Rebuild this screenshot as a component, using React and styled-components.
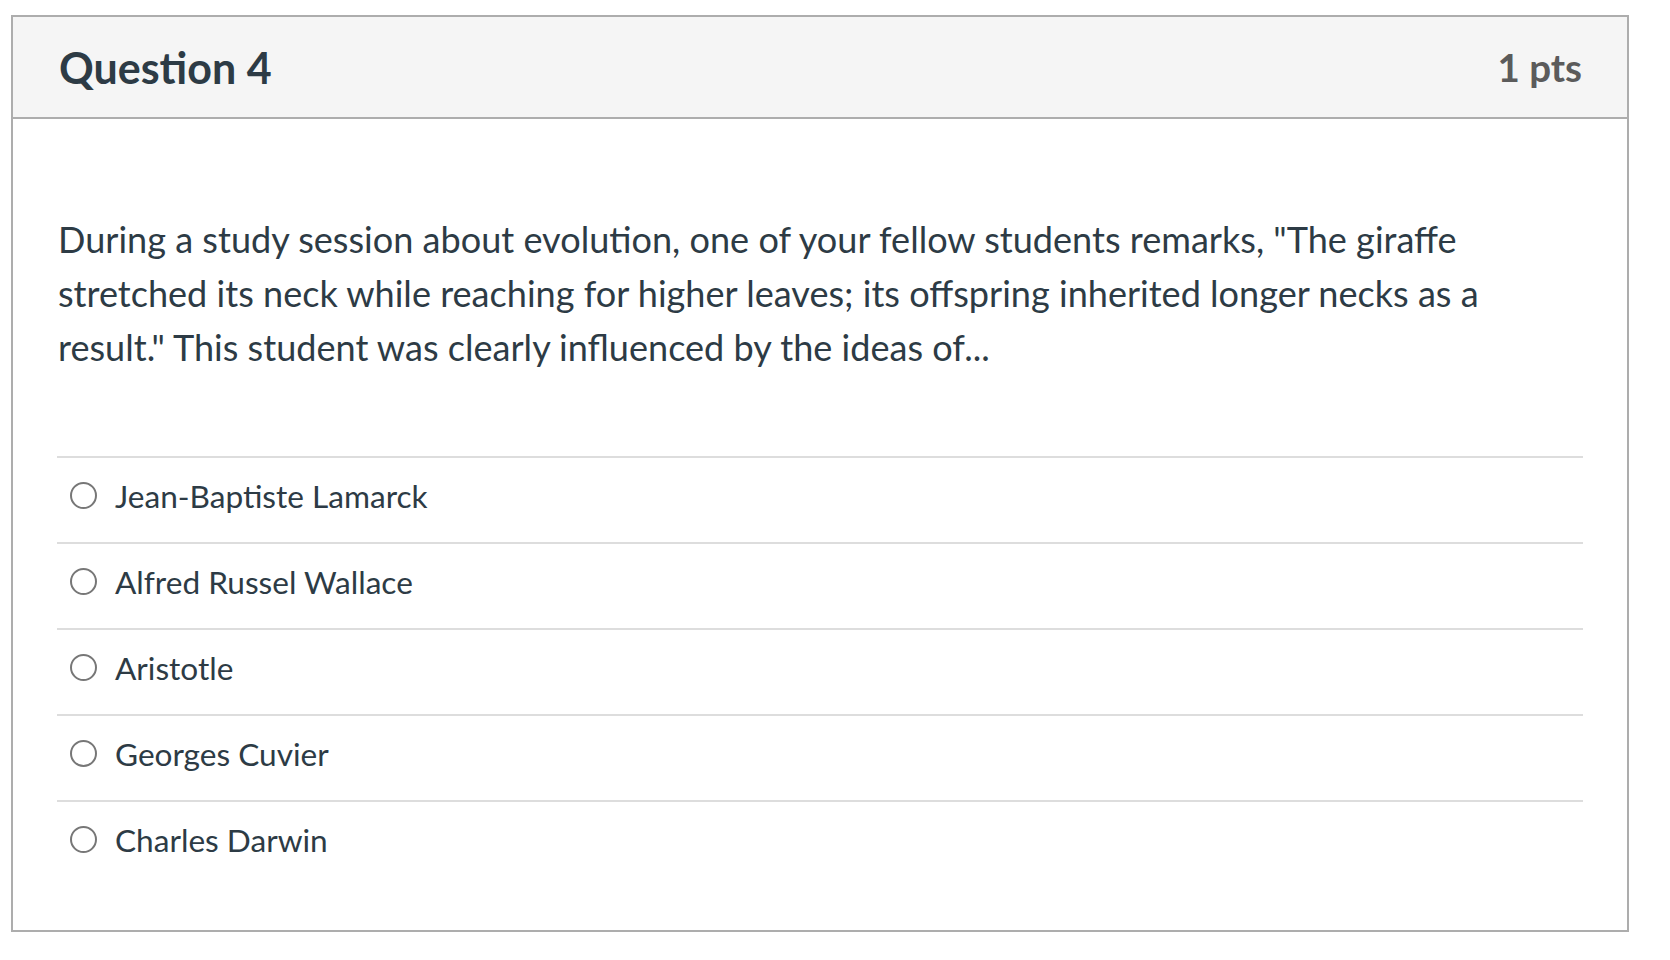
import React from "react";
import styled, { createGlobalStyle } from "styled-components";

const Global = createGlobalStyle`
  html, body { margin: 0; padding: 0; background: #ffffff; }
  body { font-family: Lato, "Noto Sans", "Liberation Sans", sans-serif; color: #2d3b45; }
`;

const Page = styled.div`
  padding: 15px 0 0 11px;
`;

const Card = styled.section`
  width: 1614px;
  border: 2px solid #adadad;
  background: #ffffff;
`;

const Header = styled.header`
  display: flex;
  align-items: center;
  justify-content: space-between;
  height: 100px;
  padding: 0 45px 0 46px;
  background: #f5f5f5;
  border-bottom: 2px solid #adadad;
`;

const Title = styled.h2`
  margin: 0;
  font-size: 43px;
  font-weight: 700;
  color: #2d3b45;
`;

const Points = styled.span`
  font-size: 38.5px;
  font-weight: 700;
  color: #5b5b5b;
`;

const Body = styled.div`
  padding: 93px 44px 44px 44px;
`;

const Prompt = styled.p`
  margin: 0 0 82px 0;
  padding: 0 10px 0 1px;
  font-size: 36.1px;
  line-height: 54px;
`;

const Answers = styled.ul`
  list-style: none;
  margin: 0;
  padding: 0;
`;

const Answer = styled.li`
  display: flex;
  align-items: center;
  gap: 18px;
  box-sizing: border-box;
  height: 86px;
  padding: 0 0 9px 13px;
  border-top: 2px solid #dddddd;
  font-size: 31.6px;
`;

const Radio = styled.span`
  flex: none;
  width: 23px;
  height: 23px;
  border: 2px solid #777777;
  border-radius: 50%;
  background: #ffffff;
`;

const options = [
  "Jean-Baptiste Lamarck",
  "Alfred Russel Wallace",
  "Aristotle",
  "Georges Cuvier",
  "Charles Darwin",
];

export default function App() {
  return (
    <>
      <Global />
      <Page>
        <Card>
          <Header>
            <Title>Question 4</Title>
            <Points>1 pts</Points>
          </Header>
          <Body>
            <Prompt>
              During a study session about evolution, one of your fellow students remarks, "The giraffe
              stretched its neck while reaching for higher leaves; its offspring inherited longer necks as a
              result." This student was clearly influenced by the ideas of...
            </Prompt>
            <Answers>
              {options.map((o) => (
                <Answer key={o}>
                  <Radio />
                  {o}
                </Answer>
              ))}
            </Answers>
          </Body>
        </Card>
      </Page>
    </>
  );
}
